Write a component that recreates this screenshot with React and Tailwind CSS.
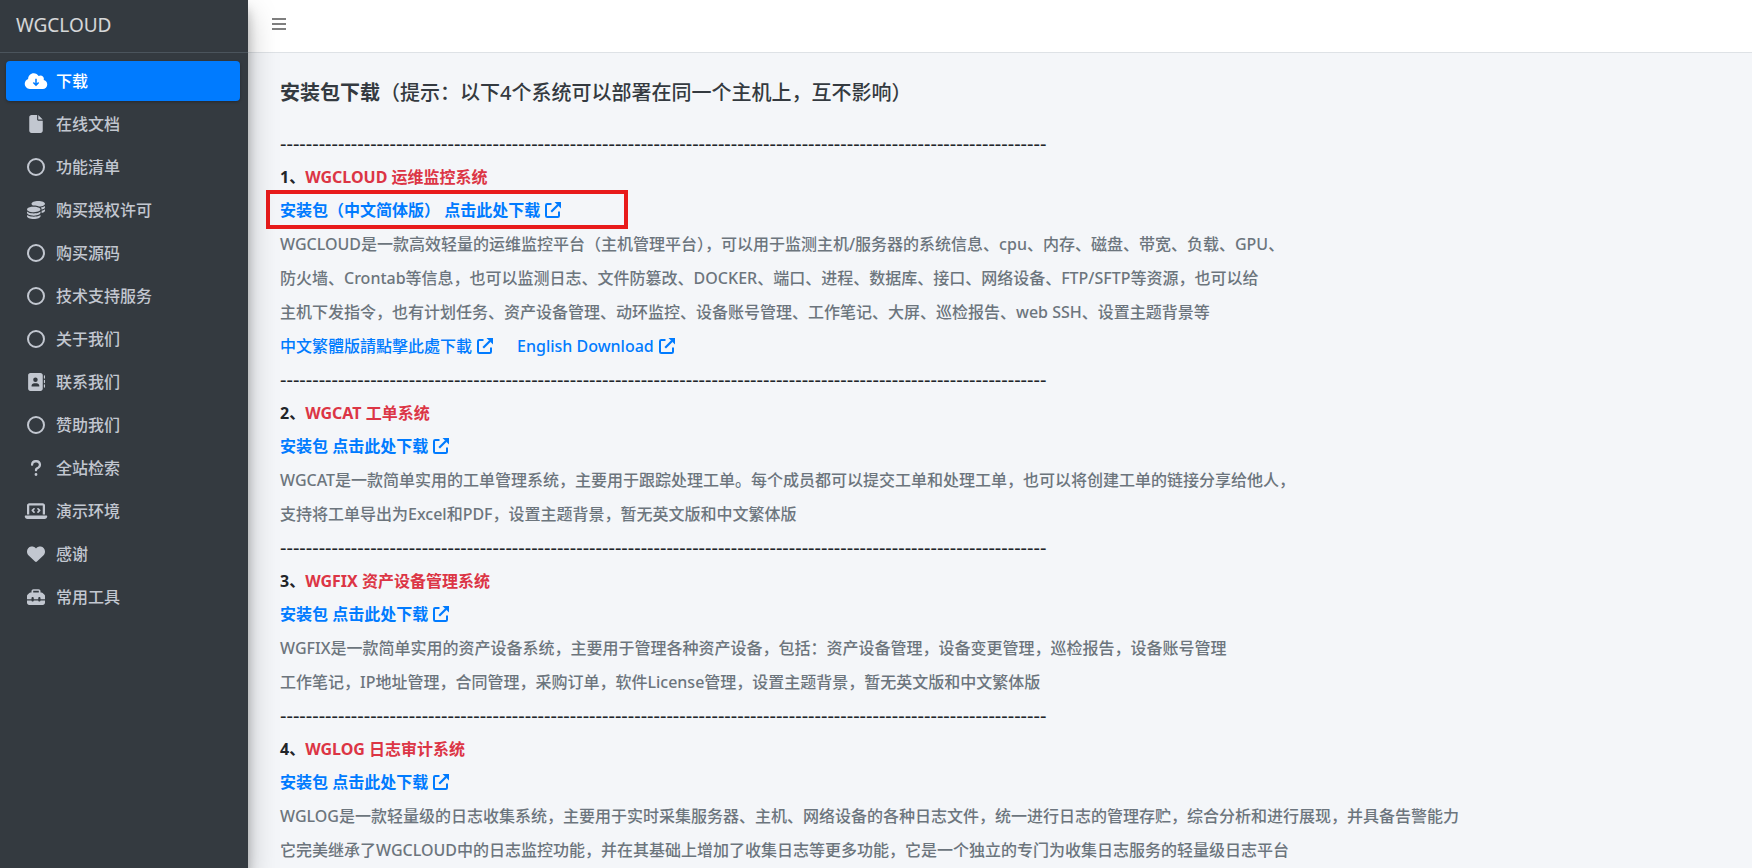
import React from "react";
import {
  FaFile, FaCoins, FaAddressBook,
  FaQuestion, FaLaptopCode, FaHeart, FaToolbox,
} from "react-icons/fa6";

function RingIcon({ className }) {
  return (
    <svg viewBox="0 0 18 18" className={className} fill="none" aria-hidden="true">
      <circle cx="9" cy="9" r="8" stroke="currentColor" strokeWidth="2" />
    </svg>
  );
}

function CloudIcon({ className }) {
  return (
    <svg viewBox="0 0 640 512" className={className} fill="currentColor" aria-hidden="true">
      <path d="M144 480C64.500 480 0 415.500 0 336c0-62.800 40.200-116.200 96.200-135.900-.1-2.700-.2-5.400-.2-8.100 0-88.400 71.600-160 160-160 59.300 0 111 32.200 138.700 80.200C409.900 102 428.300 96 448 96c53 0 96 43 96 96 0 12.200-2.300 23.800-6.400 34.600C596 238.400 640 290.100 640 352c0 70.700-57.300 128-128 128H144z" />
      <path d="M320 190V375M245 300L320 375L395 300" fill="none" stroke="#007bff" strokeWidth="44" />
    </svg>
  );
}

const menu = [
  { label: "下载", Icon: CloudIcon, wide: true, active: true },
  { label: "在线文档", Icon: FaFile },
  { label: "功能清单", Icon: RingIcon },
  { label: "购买授权许可", Icon: FaCoins },
  { label: "购买源码", Icon: RingIcon },
  { label: "技术支持服务", Icon: RingIcon },
  { label: "关于我们", Icon: RingIcon },
  { label: "联系我们", Icon: FaAddressBook },
  { label: "赞助我们", Icon: RingIcon },
  { label: "全站检索", Icon: FaQuestion },
  { label: "演示环境", Icon: FaLaptopCode, wide: true },
  { label: "感谢", Icon: FaHeart },
  { label: "常用工具", Icon: FaToolbox },
];

const products = [
  {
    name: "WGCLOUD 运维监控系统",
    link: "安装包（中文简体版） 点击此处下载",
    highlighted: true,
    lines: [
      "WGCLOUD是一款高效轻量的运维监控平台（主机管理平台），可以用于监测主机/服务器的系统信息、cpu、内存、磁盘、带宽、负载、GPU、",
      "防火墙、Crontab等信息，也可以监测日志、文件防篡改、DOCKER、端口、进程、数据库、接口、网络设备、FTP/SFTP等资源，也可以给",
      "主机下发指令，也有计划任务、资产设备管理、动环监控、设备账号管理、工作笔记、大屏、巡检报告、web SSH、设置主题背景等",
    ],
    extra: ["中文繁體版請點擊此處下載", "English Download"],
  },
  {
    name: "WGCAT 工单系统",
    link: "安装包 点击此处下载",
    lines: [
      "WGCAT是一款简单实用的工单管理系统，主要用于跟踪处理工单。每个成员都可以提交工单和处理工单，也可以将创建工单的链接分享给他人，",
      "支持将工单导出为Excel和PDF，设置主题背景，暂无英文版和中文繁体版",
    ],
  },
  {
    name: "WGFIX 资产设备管理系统",
    link: "安装包 点击此处下载",
    lines: [
      "WGFIX是一款简单实用的资产设备系统，主要用于管理各种资产设备，包括：资产设备管理，设备变更管理，巡检报告，设备账号管理",
      "工作笔记，IP地址管理，合同管理，采购订单，软件License管理，设置主题背景，暂无英文版和中文繁体版",
    ],
  },
  {
    name: "WGLOG 日志审计系统",
    link: "安装包 点击此处下载",
    lines: [
      "WGLOG是一款轻量级的日志收集系统，主要用于实时采集服务器、主机、网络设备的各种日志文件，统一进行日志的管理存贮，综合分析和进行展现，并具备告警能力",
      "它完美继承了WGCLOUD中的日志监控功能，并在其基础上增加了收集日志等更多功能，它是一个独立的专门为收集日志服务的轻量级日志平台",
    ],
  },
];

function ExternalIcon() {
  return (
    <svg viewBox="0 0 16 16" className="ml-[5px] inline-block size-4 align-[-2px]" fill="none" aria-hidden="true">
      <path d="M6.5 2H2.3Q1 2 1 3.3V13.7Q1 15 2.3 15H12.7Q14 15 14 13.7V9.5" stroke="currentColor" strokeWidth="2" />
      <path d="M6.2 9.8L13 3" stroke="currentColor" strokeWidth="2.2" />
      <path d="M9.5 0H16V6.5Z" fill="currentColor" />
    </svg>
  );
}

function MenuItem({ label, Icon, wide, active }) {
  return (
    <li>
      <a
        href="#"
        aria-current={active ? "page" : undefined}
        className={
          "flex h-10 items-center gap-1.5 rounded px-4 font-medium " +
          (active ? "bg-[#007bff] text-white shadow-[0_1px_3px_rgba(0,0,0,0.3)]" : "text-[#c2c7d0]")
        }
      >
        <span className="flex w-7 justify-center">
          <Icon className={wide ? "h-[18px] w-6" : "size-[18px]"} />
        </span>
        {label}
      </a>
    </li>
  );
}

function Divider() {
  return (
    <div aria-hidden="true" className="h-[34px] overflow-hidden whitespace-nowrap text-xl leading-[34px]">
      {"-".repeat(119)}
    </div>
  );
}

function Product({ item, index }) {
  return (
    <section>
      <Divider />
      <h2 className="h-[33px] font-bold leading-[33px]">
        {index + 1}、<span className="text-[#dc3545]">{item.name}</span>
      </h2>
      <div className="relative h-[33px] font-bold leading-[33px]">
        {item.highlighted && (
          <div className="pointer-events-none absolute -left-[14px] -top-1 h-[39px] w-[362px] border-4 border-[#e81b1b]" />
        )}
        <a href="#" className="text-[#007bff]">{item.link}<ExternalIcon /></a>
      </div>
      {item.lines.map((line) => (
        <p key={line} className="whitespace-nowrap font-medium leading-[34px] text-[#6c757d]">{line}</p>
      ))}
      {item.extra && (
        <div className="flex h-[34px] gap-6 font-medium leading-[34px] text-[#007bff]">
          {item.extra.map((text) => (
            <a key={text} href="#">{text}<ExternalIcon /></a>
          ))}
        </div>
      )}
    </section>
  );
}

export default function App() {
  return (
    <div lang="zh-CN" className="flex h-screen overflow-hidden bg-[#f4f6f9] font-['Noto_Sans','Noto_Sans_CJK_SC',sans-serif] text-base text-[#212529]">
      <aside className="z-10 w-[248px] shrink-0 bg-[#343a40] shadow-[0_14px_28px_rgba(0,0,0,0.25),0_10px_10px_rgba(0,0,0,0.22)]">
        <div className="flex h-[53px] items-center border-b border-[#4b545c] px-4 pb-0.5 text-[19px]">
          <a href="#" className="text-white/80">WGCLOUD</a>
        </div>
        <nav className="pl-1.5 pr-2 pt-2">
          <ul className="flex flex-col gap-[3px]">
            {menu.map((item) => <MenuItem key={item.label} {...item} />)}
          </ul>
        </nav>
      </aside>
      <div className="min-w-0 flex-1">
        <header className="flex h-[53px] items-center border-b border-[#dee2e6] bg-white px-6 pb-1">
          <button type="button" aria-label="菜单" className="text-[#7f7f7f]">
            <svg viewBox="0 0 14 14" className="size-3.5" fill="currentColor" aria-hidden="true">
              <path d="M0 1h14v2H0zM0 6h14v2H0zM0 11h14v2H0z" />
            </svg>
          </button>
        </header>
        <main className="px-8 pt-[25px]">
          <h1 className="mb-[19px] text-xl font-medium leading-[30px] text-[#343a40]">
            <strong className="font-bold">安装包下载</strong>（提示：以下4个系统可以部署在同一个主机上，互不影响）
          </h1>
          {products.map((item, i) => <Product key={item.name} item={item} index={i} />)}
        </main>
      </div>
    </div>
  );
}
